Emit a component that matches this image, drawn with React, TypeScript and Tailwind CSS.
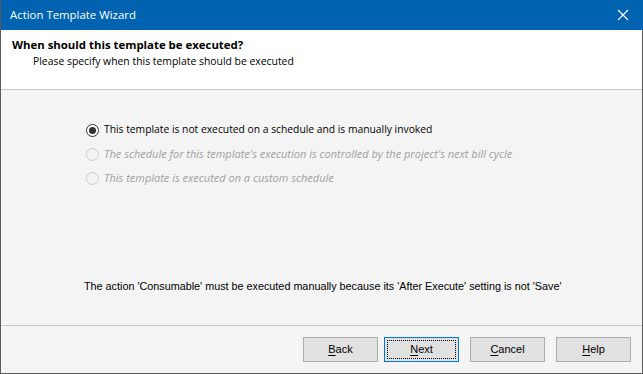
import React from "react";

const seg = { fontFamily: '"Open Sans", "Noto Sans", sans-serif' };
const tah = { fontFamily: '"Liberation Sans", Arial, sans-serif' };

function Radio({ checked, disabled }: { checked?: boolean; disabled?: boolean }) {
  return (
    <span
      className={`flex h-[13px] w-[13px] shrink-0 items-center justify-center rounded-full border ${
        disabled ? "border-[#cccccc] bg-[#f4f4f4]" : "border-[#333333] bg-white"
      }`}
    >
      {checked && <span className="h-[7px] w-[7px] rounded-full bg-[#333333]" />}
    </span>
  );
}

function Btn({ u, rest, focus }: { u: string; rest: string; focus?: boolean }) {
  return (
    <button
      className={`flex h-[25px] w-[75px] items-center justify-center border bg-[#e1e1e1] text-[11px] text-black ${
        focus ? "border-[#0078d7]" : "border-[#adadad]"
      }`}
      style={tah}
    >
      <span
        className={`flex h-[19px] w-[69px] items-center justify-center ${
          focus ? "border border-dotted border-black" : ""
        }`}
      >
        <span className="underline underline-offset-2">{u}</span>
        {rest}
      </span>
    </button>
  );
}

export default function App() {
  return (
    <div className="flex h-[374px] w-[643px] flex-col border-l border-[#5a5a5a] bg-[#f4f4f4]">
      <div className="flex h-[30px] shrink-0 items-center justify-between bg-[#0063b1] pl-[9px] pr-[14px]">
        <span className="text-[11.4px] text-white" style={seg}>
          Action Template Wizard
        </span>
        <svg width="12" height="12" viewBox="0 0 12 12">
          <path d="M1 1 L11 11 M11 1 L1 11" stroke="white" strokeWidth="1.2" />
        </svg>
      </div>
      <div className="flex flex-1 flex-col border-b border-r border-[#5a5a5a]">
        <div className="flex h-[60px] shrink-0 flex-col border-b border-[#c8c8c8] bg-white pl-[11px] pt-[7px]">
          <span className="text-[11.4px] font-bold leading-[16px] text-black" style={seg}>
            When should this template be executed?
          </span>
          <span className="pl-[21px] text-[10.4px] leading-[16px] text-black" style={seg}>
            Please specify when this template should be executed
          </span>
        </div>
        <div className="flex flex-1 flex-col border-b border-[#c8c8c8] pl-[85px]">
          <div className="mt-[32px] flex flex-col gap-[8px]">
            <label className="flex h-[16px] items-center gap-[5px] text-[10.3px] text-black" style={seg}>
              <Radio checked />
              This template is not executed on a schedule and is manually invoked
            </label>
            <label className="flex h-[16px] items-center gap-[5px] text-[11px] italic text-[#a0a0a0]" style={seg}>
              <Radio disabled />
              The schedule for this template's execution is controlled by the project's next bill cycle
            </label>
            <label className="flex h-[16px] items-center gap-[5px] text-[11px] italic text-[#a0a0a0]" style={seg}>
              <Radio disabled />
              This template is executed on a custom schedule
            </label>
          </div>
          <div className="-ml-[2px] mt-[92px] text-[10.8px] text-black" style={tah}>
            The action 'Consumable' must be executed manually because its 'After Execute' setting is not 'Save'
          </div>
        </div>
        <div className="flex h-[47px] shrink-0 items-start pl-[302px] pt-[11px]">
          <Btn u="B" rest="ack" />
          <div className="w-[6px]" />
          <Btn u="N" rest="ext" focus />
          <div className="w-[11px]" />
          <Btn u="C" rest="ancel" />
          <div className="w-[11px]" />
          <Btn u="H" rest="elp" />
        </div>
      </div>
    </div>
  );
}
